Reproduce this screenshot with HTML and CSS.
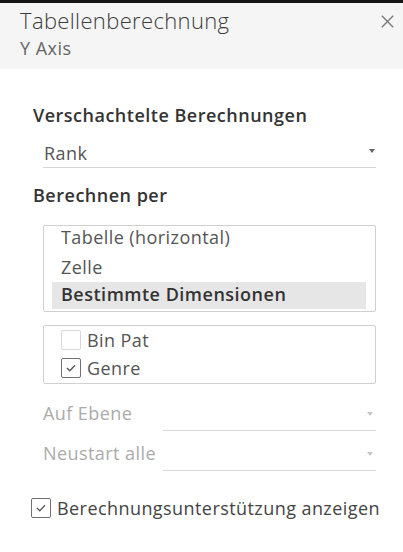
FILE: index.html
```html
<!DOCTYPE html>
<html lang="de">
<head>
<meta charset="utf-8">
<link rel="stylesheet" href="styles.css">
</head>
<body>
<div class="panel">
  <header class="head">
    <div class="titles">
      <div class="title">Tabellenberechnung</div>
      <div class="subtitle">Y Axis</div>
    </div>
    <svg class="close" width="13" height="13" viewBox="0 0 13 13"><path d="M0.8 0.8L12.2 12.2M12.2 0.8L0.8 12.2" stroke="#7a7a7a" stroke-width="1.4" fill="none"/></svg>
  </header>
  <main class="body">
    <h2 class="label">Verschachtelte Berechnungen</h2>
    <div class="select">
      <span>Rank</span>
      <span class="caret"></span>
    </div>
    <h2 class="label label2">Berechnen per</h2>
    <div class="listbox">
      <div class="item first">Tabelle (horizontal)</div>
      <div class="item second">Zelle</div>
      <div class="item selected">Bestimmte Dimensionen</div>
    </div>
    <div class="checks">
      <div class="check-row"><span class="cb"></span><span>Bin Pat</span></div>
      <div class="check-row"><span class="cb on"><svg width="10" height="8" viewBox="0 0 10 8"><path d="M1 4L3.8 6.8L9 1.2" stroke="#555" stroke-width="1.3" fill="none"/></svg></span><span>Genre</span></div>
    </div>
    <div class="fields">
      <div class="field">
        <span class="flabel">Auf Ebene</span>
        <div class="fselect"><span class="caret dim"></span></div>
      </div>
      <div class="field">
        <span class="flabel">Neustart alle</span>
        <div class="fselect"><span class="caret dim"></span></div>
      </div>
    </div>
    <div class="assist">
      <span class="cb on"><svg width="10" height="8" viewBox="0 0 10 8"><path d="M1 4L3.8 6.8L9 1.2" stroke="#555" stroke-width="1.3" fill="none"/></svg></span>
      <span class="assist-text">Berechnungsunterstützung anzeigen</span>
    </div>
  </main>
</div>
</body>
</html>
```
FILE: styles.css
```css
* { box-sizing: border-box; }
html, body { margin: 0; padding: 0; background: #fff; }
body {
  font-family: "Open Sans", "Noto Sans", sans-serif;
  color: #333;
  border-top: 3px solid #151515;
}
.panel { width: 403px; }
.head {
  background: #f5f5f5;
  height: 66px;
  display: flex;
  justify-content: space-between;
  align-items: flex-start;
  padding: 3px 9px 0 20px;
}
.title {
  font-size: 22px;
  font-weight: 300;
  color: #3c3c3c;
  line-height: 28px;
  letter-spacing: 0.35px;
}
.subtitle {
  font-size: 18px;
  color: #666;
  line-height: 22px;
  margin-top: 3px;
  letter-spacing: 0.5px;
}
.close { margin-top: 9px; }
.body {
  padding: 35px 27px 0 33px;
  font-size: 18px;
  letter-spacing: 0.43px;
}
.label {
  margin: 0;
  font-size: 18px;
  font-weight: 600;
  color: #333;
  line-height: 22px;
  letter-spacing: 0.5px;
}
.label2 { margin-top: 16px; }
.select {
  margin: 15px 0 0 10px;
  height: 27px;
  border-bottom: 1px solid #d6d6d6;
  display: flex;
  justify-content: space-between;
  align-items: flex-start;
  color: #555;
  padding-left: 1px;
  line-height: 24px;
}
.caret {
  width: 0; height: 0;
  border-left: 3.5px solid transparent;
  border-right: 3.5px solid transparent;
  border-top: 4px solid #666;
  margin: 8px 1px 0 0;
}
.caret.dim { border-top-color: #c8c8c8; }
.listbox {
  margin: 19px 0 0 10px;
  border: 1px solid #d0d0d0;
  border-radius: 2px;
  padding: 0 9px 2px 8px;
  height: 87px;
}
.item {
  color: #555;
  line-height: 22px;
  height: 22px;
  padding-left: 9px;
}
.item.first { margin-bottom: 8px; }
.item.second { margin-bottom: 4px; }
.item.selected {
  background: #e6e6e6;
  font-weight: 600;
  color: #333;
  height: 27px;
  line-height: 24px;
  letter-spacing: 0.5px;
}
.checks {
  margin: 13px 0 0 10px;
  border: 1px solid #d0d0d0;
  border-radius: 2px;
  height: 59px;
  padding: 0 8px 1px 17px;
}
.check-row {
  display: flex;
  align-items: center;
  gap: 6px;
  height: 28px;
  line-height: 24px;
  color: #555;
}
.cb {
  width: 20px; height: 20px;
  border: 1px solid #d6d6d6;
  border-radius: 2px;
  display: inline-flex;
  align-items: center;
  justify-content: center;
  background: #fff;
  flex: none;
}
.cb.on { border-color: #707070; }
.fields {
  margin: 17px 0 0 10px;
  display: flex;
  flex-direction: column;
  gap: 10px;
}
.field {
  display: flex;
  height: 30px;
}
.flabel {
  width: 120px;
  color: #ababab;
  line-height: 24px;
  padding-top: 0;
}
.fselect {
  flex: 1;
  border-bottom: 1px solid #d6d6d6;
  display: flex;
  justify-content: flex-end;
}
.fselect .caret { margin-top: 11px; margin-right: 3px; }
.assist {
  display: flex;
  align-items: center;
  gap: 6px;
  height: 24px;
  line-height: 24px;
  margin: 25px -20px 0 -2px;
  color: #444;
  white-space: nowrap;
}
```
